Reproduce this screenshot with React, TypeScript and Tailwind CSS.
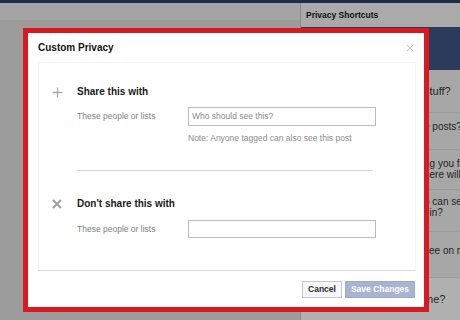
import React from "react";

const PlusIcon = () => (
  <svg width="11" height="11" viewBox="0 0 11 11">
    <path d="M5.5 0.5v10M0.5 5.5h10" stroke="#ababab" strokeWidth="1.3" />
  </svg>
);

const CrossIcon = ({ size = 10, color = "#9f9f9f", width = 2 }: { size?: number; color?: string; width?: number }) => (
  <svg width={size} height={size} viewBox="0 0 10 10">
    <path d="M1 1l8 8M9 1l-8 8" stroke={color} strokeWidth={width} />
  </svg>
);

const PeopleRow = ({ placeholder, height }: { placeholder: string; height: string }) => (
  <div className="flex items-center">
    <div className="w-[111px] text-[8.5px] leading-[11px] text-[#808080]">These people or lists</div>
    <div className={`w-[188px] ${height} border border-[#bcbcbc] flex items-center px-[3px] text-[8.5px] text-[#8a8a8a]`}>
      {placeholder}
    </div>
  </div>
);

const shortcutRows = [
  { h: "h-[43px]", pt: "pt-[15px]", lines: ["stuff?"], size: "text-[11px] leading-[13px]" },
  { h: "h-[37px]", pt: "pt-[8px]", lines: ["e posts?"], size: "text-[10px] leading-[12px]" },
  { h: "h-[40px]", pt: "pt-[8px]", lines: ["ng you fi", "here will"], size: "text-[10px] leading-[11px]" },
  { h: "h-[42px]", pt: "pt-[6px]", lines: ["o can se", "t in?"], size: "text-[10px] leading-[11px]" },
  { h: "h-[46px]", pt: "pt-[13px]", lines: ["see on m"], size: "text-[10px] leading-[12px]" },
];

export default function App() {
  return (
    <div
      className="relative w-[460px] h-[320px] overflow-hidden bg-[#9c9c9c] flex flex-col"
      style={{ fontFamily: '"Liberation Sans", Arial, sans-serif' }}
    >
      <div className="h-[3px] bg-[#1f2b49]" />
      <div className="flex flex-1">
        {/* page behind the dialog */}
        <div className="flex-1 flex flex-col">
          <div className="h-[17px] bg-[#a4a4a4]" />
        </div>

        {/* Privacy Shortcuts panel */}
        <div className="w-[160px] border-l border-[#8c8c8c] flex flex-col">
          <div className="h-[24px] bg-[#aaaaaa] flex items-center pl-[5px] text-[8.5px] font-bold text-[#111]">
            Privacy Shortcuts
          </div>
          <div className="h-[43px] bg-[#2c3a5e]" />
          {shortcutRows.map((row, i) => (
            <div
              key={i}
              className={`${row.h} ${row.pt} pl-[123px] bg-[#a7a7a7] border-b border-[#9a9a9a] text-[#242424] whitespace-nowrap overflow-hidden ${row.size}`}
            >
              {row.lines.map((l, j) => (
                <div key={j}>{l}</div>
              ))}
            </div>
          ))}
          <div className="flex-1 bg-[#b0b0b0] pl-[123px] pt-[15px] text-[11px] leading-[13px] text-[#242424]">
            me?
          </div>
        </div>
      </div>

      {/* Custom Privacy dialog, framed in red */}
      <div className="absolute left-[23px] top-[28px] w-[406px] h-[284px] border-[5px] border-[#d8191f]">
        <div className="w-full h-full bg-white flex flex-col">
          <div className="h-[29px] flex items-center justify-between pl-[10px] pr-[10px]">
            <span className="text-[10px] font-bold text-[#141414]">Custom Privacy</span>
            <CrossIcon size={8} color="#c2c2c2" width={1.2} />
          </div>

          <div className="ml-[10px] mr-[8px] h-[209px] border border-[#f6f6f6] border-b-[#dadada] pl-[9px] pt-[23px]">
            <div className="flex items-start">
              <div className="w-[18px] h-[12px] flex items-center justify-center">
                <PlusIcon />
              </div>
              <div className="ml-[11px]">
                <div className="h-[12px] leading-[12px] text-[10px] font-bold text-[#1a1a1a]">Share this with</div>
                <div className="mt-[9px]">
                  <PeopleRow placeholder="Who should see this?" height="h-[19px]" />
                </div>
                <div className="mt-[7px] pl-[111px] text-[8.5px] leading-[11px] text-[#8a8a8a]">
                  Note: Anyone tagged can also see this post
                </div>
                <div className="mt-[26px] w-[296px] border-t border-[#d3d3d3]" />
              </div>
            </div>

            <div className="flex items-start mt-[27px]">
              <div className="w-[18px] h-[12px] flex items-center justify-center">
                <CrossIcon />
              </div>
              <div className="ml-[11px]">
                <div className="h-[12px] leading-[12px] text-[10px] font-bold text-[#1a1a1a]">Don't share this with</div>
                <div className="mt-[10px]">
                  <PeopleRow placeholder="" height="h-[18px]" />
                </div>
              </div>
            </div>
          </div>

          <div className="flex justify-end gap-[3px] pt-[10px] pr-[9px]">
            <button className="w-[40px] h-[17px] bg-[#f6f7f8] border border-[#c8c8c8] text-[8.5px] font-bold text-[#2b2b2b]">
              Cancel
            </button>
            <button className="w-[70px] h-[17px] bg-[#a8b4d1] border border-[#9eaac7] text-[8.5px] font-bold text-white">
              Save Changes
            </button>
          </div>
        </div>
      </div>
    </div>
  );
}
